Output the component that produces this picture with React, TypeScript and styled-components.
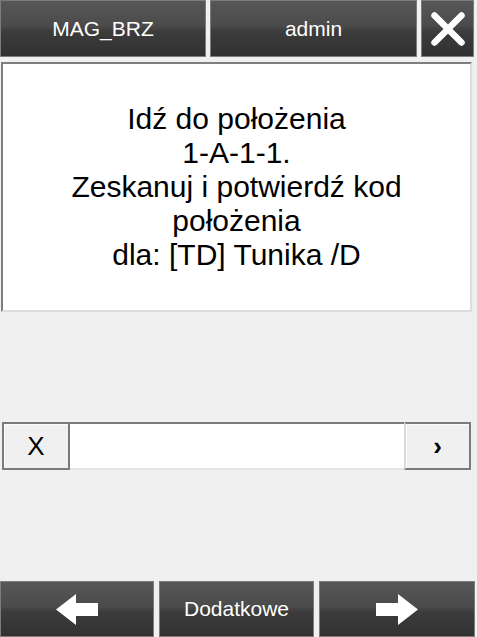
import styled, { createGlobalStyle } from 'styled-components';

const GlobalStyle = createGlobalStyle`
	html, body {
		margin: 0;
		padding: 0;
		background: #f0f0f0;
	}
	body {
		font-family: 'Liberation Sans', Arial, sans-serif;
	}
`;

const Screen = styled.div`
	width: 477px;
	height: 637px;
	display: flex;
	flex-direction: column;
	background: #f0f0f0;
	overflow: hidden;
`;

const TopBar = styled.div`
	display: grid;
	grid-template-columns: 206px 207px 53px;
	column-gap: 4px;
	height: 57px;
`;

const BottomBar = styled.div`
	display: grid;
	grid-template-columns: 154px 155px 156px;
	column-gap: 5px;
	height: 56px;
	margin-top: auto;
`;

const DarkButton = styled.button`
	box-sizing: border-box;
	display: flex;
	align-items: center;
	justify-content: center;
	border: 1px solid #7c7c7c;
	background: linear-gradient(#575757 0%, #4b4b4b 45%, #3c3c3c 55%, #313131 100%);
	color: #fff;
	font-family: inherit;
	font-size: 21px;
	padding: 0;
	cursor: pointer;
	&:focus {
		outline: none;
	}
`;

const Panel = styled.div`
	box-sizing: border-box;
	margin: 5px 5px 0 1px;
	height: 250px;
	display: flex;
	align-items: center;
	justify-content: center;
	background: #fff;
	border-top: 2px solid #7e7e7e;
	border-left: 2px solid #7e7e7e;
	border-right: 2px solid #dcdcdc;
	border-bottom: 2px solid #dcdcdc;
	text-align: center;
	font-size: 30px;
	line-height: 34px;
	color: #000;
`;

const ScanRow = styled.div`
	box-sizing: border-box;
	display: flex;
	height: 48px;
	margin: 110px 6px 0 2px;
`;

const SideButton = styled.button<{ $side: 'left' | 'right' }>`
	box-sizing: border-box;
	width: ${({ $side }) => ($side === 'left' ? '68px' : '67px')};
	height: 100%;
	display: flex;
	align-items: center;
	justify-content: center;
	background: #f0f0f0;
	border: 2px solid #7a7a7a;
	border-left-color: ${({ $side }) => ($side === 'left' ? '#7a7a7a' : '#dadada')};
	box-shadow: inset 1px 1px 0 #fbfbfb;
	color: #000;
	font-family: inherit;
	font-size: ${({ $side }) => ($side === 'left' ? '26px' : '26px')};
	font-weight: ${({ $side }) => ($side === 'left' ? 400 : 700)};
	padding: 0;
	&:focus {
		outline: none;
	}
`;

const ScanInput = styled.input`
	box-sizing: border-box;
	flex: 1;
	min-width: 0;
	height: 100%;
	border: none;
	border-top: 2px solid #7a7a7a;
	border-bottom: 2px solid #e3e3e3;
	background: #fff;
	font-family: inherit;
	font-size: 22px;
	padding: 0 6px;
	&:focus {
		outline: none;
	}
`;

function CloseIcon() {
	return (
		<svg width="34" height="34" viewBox="0 0 34 34">
			<path
				d="M3.5 3.5 L30.5 30.5 M30.5 3.5 L3.5 30.5"
				stroke="#fff"
				strokeWidth="6.5"
				strokeLinecap="round"
			/>
		</svg>
	);
}

function Arrow({ dir }: { dir: 'left' | 'right' }) {
	return (
		<svg
			width="42"
			height="31"
			viewBox="0 0 42 31"
			style={{ transform: dir === 'right' ? 'scaleX(-1)' : undefined }}
		>
			<polygon
				points="0,15.5 20,0 20,9 42,9 42,22 20,22 20,31"
				fill="#fff"
			/>
		</svg>
	);
}

export default function App() {
	return (
		<>
			<GlobalStyle />
			<Screen>
				<TopBar>
					<DarkButton>MAG_BRZ</DarkButton>
					<DarkButton>admin</DarkButton>
					<DarkButton aria-label="Zamknij">
						<CloseIcon />
					</DarkButton>
				</TopBar>
				<Panel>
					<div>
						Idź do położenia
						<br />
						1-A-1-1.
						<br />
						Zeskanuj i potwierdź kod
						<br />
						położenia
						<br />
						dla: [TD] Tunika /D
					</div>
				</Panel>
				<ScanRow>
					<SideButton $side="left">X</SideButton>
					<ScanInput type="text" aria-label="Kod położenia" />
					<SideButton $side="right">›</SideButton>
				</ScanRow>
				<BottomBar>
					<DarkButton aria-label="Wstecz">
						<Arrow dir="left" />
					</DarkButton>
					<DarkButton>Dodatkowe</DarkButton>
					<DarkButton aria-label="Dalej">
						<Arrow dir="right" />
					</DarkButton>
				</BottomBar>
			</Screen>
		</>
	);
}
